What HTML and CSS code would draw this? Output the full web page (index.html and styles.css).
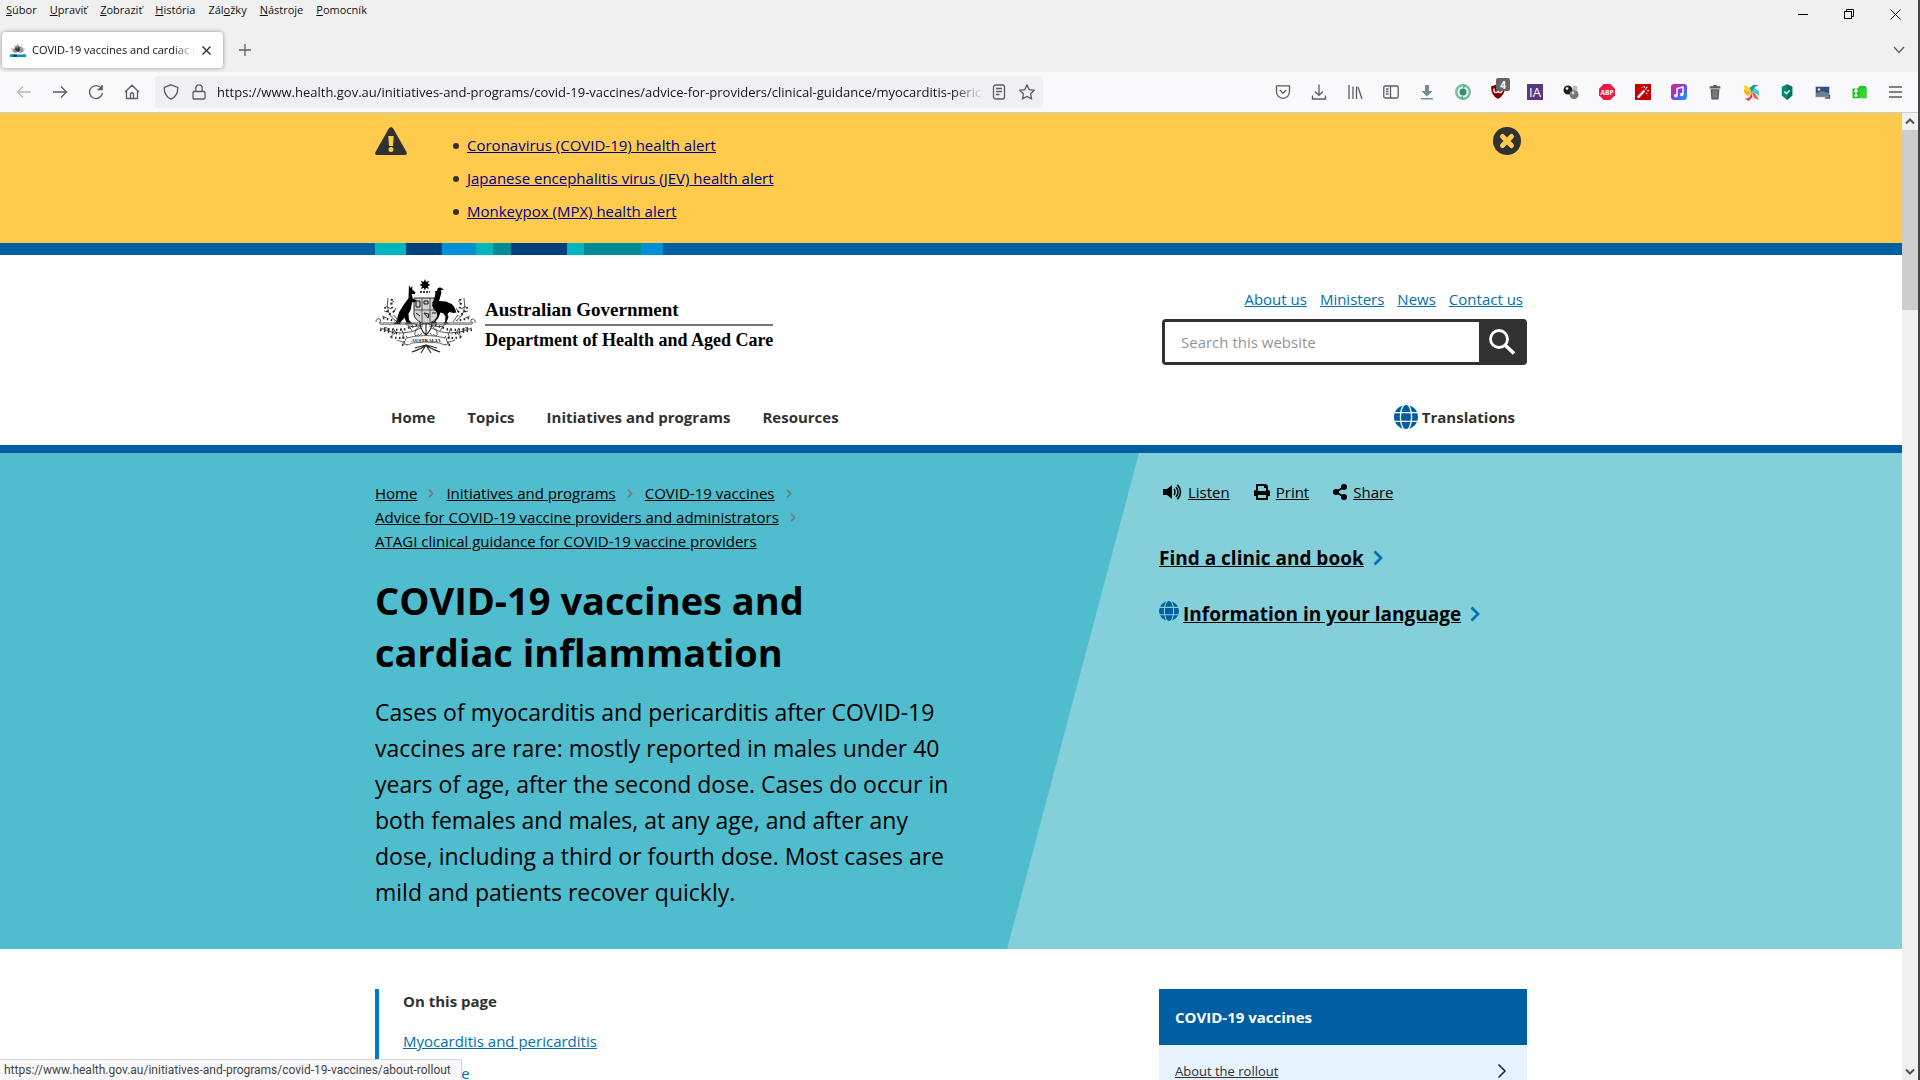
FILE: index.html
```html
<!DOCTYPE html>
<html lang="en">
<head>
<meta charset="utf-8">
<title>COVID-19 vaccines and cardiac inflammation</title>
<link rel="stylesheet" href="styles.css">
</head>
<body>
<svg class="defs" aria-hidden="true">
  <symbol id="globe" viewBox="0 0 24 24">
    <circle cx="12" cy="12" r="12" fill="#005ea2"/>
    <g fill="none" stroke="var(--gap, #fff)" stroke-width="1.3"><path d="M0 7.6H24M0 16.4H24"/><ellipse cx="12" cy="12" rx="5.6" ry="13"/></g>
  </symbol>
  <symbol id="chev" viewBox="0 0 10 16"><path d="M1.500 1.500 8 8l-6.500 6.500" fill="none" stroke="currentColor" stroke-width="var(--w, 2.800)"/></symbol>
</svg>

<div class="chrome">
  <div class="titlebar">
    <nav class="menu" lang="sk">
      <button><u>S</u>úbor</button><button><u>U</u>praviť</button><button><u>Z</u>obraziť</button><button><u>H</u>istória</button><button>Zál<u>o</u>žky</button><button><u>N</u>ástroje</button><button><u>P</u>omocník</button>
    </nav>
    <div class="controls">
      <button aria-label="Minimize"><svg width="10" height="10"><path d="M0 5.500H10" stroke="#000"/></svg></button>
      <button aria-label="Restore"><svg width="10" height="10" fill="none" stroke="#000"><path d="M.5 2.500h7v7h-7zM2.500 2.500v-2h7v7h-2"/></svg></button>
      <button aria-label="Close window"><svg width="11" height="11" stroke="#000"><path d="M.5.5l10 10M10.500.5l-10 10"/></svg></button>
    </div>
  </div>

  <div class="tabs">
    <div class="tab">
      <svg width="16" height="16" viewBox="0 0 16 16"><path d="M2 9 5 5l2-2 1-1 1 2 3 1 2 4-3 2-3-1-3 1z" fill="#999"/><path d="M5 8l1-4 1 3 2-3 1 4-2 2z" fill="#333"/><path d="M1 7h2M13 7h2M4 3l1 1M11 3l1-1" stroke="#aaa"/><path d="M0 12.500h16v2.500H0z" fill="#008fd5"/><path d="M0 12.500h3v2.500H0zM13 12.500h3v2.500h-3z" fill="#00a0a8"/><path d="M3 12.500h4v2.500H3z" fill="#003f80"/></svg>
      <span class="tab-title">COVID-19 vaccines and cardiac inflammation</span>
      <button aria-label="Close tab"><svg width="9" height="9" stroke="#222" stroke-width="1.200"><path d="M.5.5l8 8M8.500.5l-8 8"/></svg></button>
    </div>
    <button class="new-tab" aria-label="New tab"><svg width="12" height="12" stroke="#5b5b66" stroke-width="1.300"><path d="M6 0v12M0 6h12"/></svg></button>
    <button class="list-tabs" aria-label="List all tabs"><svg width="12" height="8" fill="none" stroke="#5b5b66" stroke-width="1.300"><path d="M1 1l5 5.500L11 1"/></svg></button>
  </div>

  <div class="toolbar">
    <button aria-label="Back"><svg width="16" height="16" class="ln dim"><path d="M15 8H1.500M7 2.500 1.500 8 7 13.500"/></svg></button>
    <button aria-label="Forward"><svg width="16" height="16" class="ln"><path d="M1 8h13.500M9 2.500 14.500 8 9 13.500"/></svg></button>
    <button aria-label="Reload"><svg width="16" height="16" class="ln"><path d="M13.500 4.500A6.500 6.500 0 1 0 14.500 8.800M14 1v4.500H9.500"/><path d="M14.500 1v5h-5z" fill="#5b5b66" stroke="none"/></svg></button>
    <button aria-label="Home"><svg width="16" height="16" class="ln"><path d="M1 8 8 1.200 15 8M2.500 7v7.500h11V7M6.500 14v-4.500q1.500-1.500 3 0V14"/></svg></button>
    <div class="urlbar">
      <svg width="16" height="16" class="ln"><path d="M8 .8 14.800 3.500Q15 12 8 15.200 1 12 1.200 3.500z"/></svg>
      <svg width="16" height="16" class="ln lock"><path d="M3 7.500h10q1 0 1 1v5.500q0 1-1 1H3q-1 0-1-1V8.500q0-1 1-1zM4.800 7V4a3.200 3.200 0 0 1 6.400 0v3"/></svg>
      <input type="text" aria-label="Address" value="https://www.health.gov.au/initiatives-and-programs/covid-19-vaccines/advice-for-providers/clinical-guidance/myocarditis-pericarditis">
      <button aria-label="Reader view"><svg width="16" height="16" class="ln"><rect x="2.500" y="1" width="11" height="14" rx="2"/><path d="M5 4.500h6M5 7.500h6M5 10.500h3.500"/></svg></button>
      <button aria-label="Bookmark"><svg width="16" height="16" class="ln"><path d="M8 1l2.200 4.600 5 .7-3.600 3.500.9 5L8 12.400l-4.500 2.400.9-5L.8 6.300l5-.7z"/></svg></button>
    </div>
    <div class="extensions">
      <button aria-label="Pocket"><svg width="16" height="16" class="ln"><path d="M1.500 1.800h13v6a6.500 6.500 0 0 1-13 0zM4.800 6 8 9.200 11.200 6"/></svg></button>
      <button aria-label="Downloads"><svg width="16" height="16" class="ln"><path d="M8 .5v10.500M4 7.500 8 11.300l4-3.800M1.500 11.500V15h13v-3.500"/></svg></button>
      <button aria-label="Library"><svg width="16" height="16" class="ln"><path d="M2 1v14M6 2.500V15M9.500 2.500V15M11 3l4 12"/></svg></button>
      <button aria-label="Sidebar"><svg width="16" height="16" class="ln"><rect x=".8" y="2" width="14.400" height="12" rx="1.500"/><path d="M7.500 2v12M3 5h2.500M3 7.500h2.500M3 10h2.500"/></svg></button>
      <button aria-label="Downloader"><svg width="16" height="16"><path d="M6 1h4v6h3.500L8 12.500 2.500 7H6zM2 14h12v1.500H2z" fill="#739090"/></svg></button>
      <button aria-label="Blocker"><svg width="16" height="16"><circle cx="8" cy="8" r="6.800" fill="#e8f5ef" stroke="#78bda2" stroke-width="2.400"/><circle cx="8" cy="8" r="3.500" fill="#3c8c78"/><path d="M8 0l3 2-3 3zM8 16l-3-2 3-3z" fill="#5eae90"/></svg></button>
      <button aria-label="uBlock"><svg width="20" height="22" viewBox="0 0 20 22" class="badge-icon"><path d="M8 6l7 2.500q0 9-7 12.500Q1 17.500 1 8.500z" fill="#800000"/><path d="M4 10.500v2q0 2 2 2t2-2v-2M8 12.500q0 2 2 2t2-2-2-2" fill="none" stroke="#fff" stroke-width="1.300"/><rect x="6" width="14" height="13" rx="2" fill="#666"/><text x="13" y="10.500" text-anchor="middle" class="badge">4</text></svg></button>
      <button aria-label="Internet Archive"><svg width="16" height="16"><rect width="16" height="16" fill="#57397f"/><text x="8" y="13" text-anchor="middle" class="ia">IA</text></svg></button>
      <button aria-label="Spheres"><svg width="16" height="16"><circle cx="5" cy="6" r="4.500" fill="#222"/><circle cx="11" cy="10.500" r="4.500" fill="#777"/><circle cx="12" cy="4" r="2.500" fill="#bbb"/><circle cx="4" cy="4.500" r="1.300" fill="#fff"/><circle cx="10" cy="9" r="1.400" fill="#ddd"/></svg></button>
      <button aria-label="Adblock Plus"><svg width="16" height="16" viewBox="0 0 17 17"><path d="M5 0h7l5 5v7l-5 5H5l-5-5V5z" fill="#ee1944"/><text x="8.500" y="11.500" text-anchor="middle" class="abp">ABP</text></svg></button>
      <button aria-label="Wand"><svg width="16" height="16" viewBox="0 0 17 17"><rect width="17" height="17" fill="#c80000"/><path d="M3 14.500 10 7" stroke="#fff" stroke-width="2.500"/><path d="M7 3.500h1M10 2v2M13 3l-1 1.500M13 7h2M12 9.500l1 1M11 6l1-1" stroke="#fff" stroke-width="1.200"/></svg></button>
      <button aria-label="Music"><svg width="16" height="16"><defs><linearGradient id="mg" x2="1" y2="1"><stop stop-color="#e6286e"/><stop offset=".5" stop-color="#7d3cf0"/><stop offset="1" stop-color="#00b0f0"/></linearGradient></defs><rect width="16" height="16" rx="3" fill="url(#mg)"/><path d="M6 11.500V4.500l6-1.500v7" fill="none" stroke="#fff" stroke-width="1.500"/><circle cx="4.800" cy="11.800" r="1.800" fill="#fff"/><circle cx="10.800" cy="10.500" r="1.800" fill="#fff"/></svg></button>
      <button aria-label="Trash"><svg width="16" height="16" viewBox="0 0 16 18"><path d="M2 2.500h4V1h4v1.500h4V5H2zM3 6h10l-1 11.500H4z" fill="#5a5a5a"/><path d="M6 7.500v8M8 7.500v8M10 7.500v8" stroke="#999"/></svg></button>
      <button aria-label="Pinwheel"><svg width="17" height="17" viewBox="0 0 18 18"><path d="M9 9 1 4l1-3 5 3z" fill="#ffd400"/><path d="M9 9 7 4l4-3 6 0-4 2z" fill="#1f95a3"/><path d="M9 9l3-5 5 4v5l-3-3z" fill="#4cc3d9"/><path d="M9 9l4 1 4 7-5-2z" fill="#f4623a"/><path d="M9 9l1 5-4 4-4-2 5-2z" fill="#f03e3e"/><path d="M9 9 5 13 1 9l0-4z" fill="#ffb01f"/></svg></button>
      <button aria-label="Shield"><svg width="14" height="16" viewBox="0 0 16 18"><path d="M8 0l6 3v10l-6 5-6-5V3z" fill="#008a68"/><path d="M8 0l6 3v10l-6 5z" fill="#00745c"/><path d="M5 8.500l2.500 2.500L11 7" fill="none" stroke="#fff" stroke-width="1.500"/></svg></button>
      <button aria-label="Screenshot"><svg width="16" height="13"><rect x=".5" y=".5" width="14" height="10.500" fill="#2d4f86" stroke="#c5ccd6"/><path d="M1 7l6-2 7 2v3H1z" fill="#6b7f90"/><circle cx="4" cy="3.500" r="1.300" fill="#ffe27a"/><path d="M10 12h4.500v-3" stroke="#555" fill="none" stroke-width="1.300"/></svg></button>
      <button aria-label="Folder"><svg width="17" height="14" viewBox="0 0 18 16"><path d="M1 4h6l2-3h6l2 1v13H1z" fill="#1fc21f"/><path d="M9 4h8v11H9z" fill="#35d435"/><path d="M5 5v8M3 7.500 5 5l2 2.500M3 12.500h4" stroke="#fff" stroke-width="1.400" fill="none"/></svg></button>
      <button aria-label="Menu"><svg width="16" height="16" class="ln"><path d="M2 3h13M2 8h13M2 13h13"/></svg></button>
    </div>
  </div>
</div>

<div class="view">
  <div class="page">
    <section class="alerts">
      <div class="wrap alerts-row">
        <svg width="32" height="28" viewBox="0 0 32 28"><path d="M13.800 1.500q2.200-3 4.400 0L31.500 25q1 3-1.500 3H2q-2.500 0-1.500-3z" fill="#313131"/><path d="M13.300 9h5.400l-.7 10h-4z" fill="#fecb4d"/><circle cx="16" cy="22.500" r="2.500" fill="#fecb4d"/></svg>
        <ul>
          <li><a href="#">Coronavirus (COVID-19) health alert</a></li>
          <li><a href="#">Japanese encephalitis virus (JEV) health alert</a></li>
          <li><a href="#">Monkeypox (MPX) health alert</a></li>
        </ul>
        <button aria-label="Close alerts"><svg width="28" height="28"><circle cx="14" cy="14" r="14" fill="#313131"/><path d="M9.500 9.500l9 9M18.500 9.500l-9 9" stroke="#fecb4d" stroke-width="5" stroke-linecap="round"/></svg></button>
      </div>
    </section>

    <div class="band"><div class="wrap stripes"><i class="teal w31"></i><i class="navy w36"></i><i class="sky w34"></i><i class="teal w17"></i><i class="sea w18"></i><i class="navy w56"></i><i class="teal w17"></i><i class="sea w57"></i><i class="sky w22"></i></div></div>

    <header class="site-head">
      <div class="wrap head-row">
        <a class="brand" href="#">
          <svg width="102" height="76" viewBox="0 0 102 76" aria-hidden="true">
            <path d="M50 1l1.200 2.900 2.900-1.200-1.200 2.900L55.500 7l-2.700 1.100 1 2.900-2.800-1.300L50 12.500l-1.200-2.800L46 11l1-2.900L44.500 7l2.600-1.400-1.200-2.900 2.900 1.200z"/>
            <path d="M45 14h10" stroke="#000" stroke-width="1.400" stroke-dasharray="2 1"/>
            <path d="M39 20h24v17q-1 6-12 9.500Q40 43 39 37z" fill="#d2d2d2" stroke="#222"/>
            <path d="M47 20v24M55 20v24M39 32h24" stroke="#555" fill="none"/>
            <path d="M41 23h4v6h-4zM49 23h4v3h-4zM57 24l4 4M61 24l-4 4M41 35l4 3M49 35l4 5 1-4zM57 35h4" stroke="#111" fill="none"/>
            <path d="M34 7l1.500 3 2-2-.3 3.500 3.300 3-.5 1.500-3.500.2 1.500 4.800 3.500 1-1 2-3.500.2-1 6.800-2.500 5 .5 6 3 3 5 .8H32l-2.500-6-3.500 4-1 2.500-11 1q7-1 8-6l2-7 5-8 4.500-6z"/>
            <path d="M62 13q0-4 3.500-3.500l3.500 2-3 .5q1 3-.5 6l-1.500 5q4 0 7 .5 5 1.500 8 5l2.500 6-3 .5-4-1-2 2 1 3-2 5 2.500 1.500h-6l2-2 .5-5-2-3-3-1-2 5-3 4 2 2h-7l4-2.500 3-5-1-4q-5-4-4-9l2.500-7q1-3 0-5z"/>
            <path d="M1 44q0-4 4-3 2 2-1 4h94q-4-2-1-4 4 0 3 4" fill="none" stroke="#555"/>
            <path d="M5 46.500h92" stroke="#999"/>
            <g fill="none" stroke="#444" stroke-width=".9" id="foliage">
              <path d="M48 46Q36 52 30 45M21 43Q10 36 13 20M16 31l-5-3M15 26l4-3M14 34l-5-1M18 35l3-5M12 40l-5-2M24 44l-5-7M46 50Q28 60 5 50M14 53l-3-4M21 55l-3-5M28 55l-2-5M20 55l-5 4M29 55l-2 6M37 53l-3-5M44 56Q32 68 22 62M35 62l-4-4M30 63l-3 4M48 48q-6 0-8 6t8 5M47 55q-4 6-8 5"/>
              <path stroke="#222" stroke-dasharray="1.500 2.500" stroke-width="2.200" d="M17 21q-2 8 3 14M10 29q2 6 8 9M8 40l12 3M5 52l20 4M16 59q8 2 16 0M27 67q6 0 12-5M33 50l9-3M9 50q12 3 22 1"/>
            </g>
            <use href="#foliage" transform="matrix(-1 0 0 1 102 0)"/>
            <path d="M51 45v14M45 44q0 8 6 13 6-5 6-13M40 70l11-3 11 3M37 74q9-3 14-7 5 4 14 7M46 75l5-8 5 8" fill="none" stroke="#222" stroke-width="1.100"/>
            <path d="M31 60q20-5 40 0l2 6q-5 2-8-1-14-2-28 0-3 3-8 1z" fill="#fff" stroke="#444" stroke-width=".8"/>
            <text x="51" y="64" text-anchor="middle" class="crest-text">AUSTRALIA</text>
          </svg>
          <span class="brand-text"><span class="gov">Australian Government</span><span class="dept">Department of Health and Aged Care</span></span>
        </a>
        <div class="head-tools">
          <nav class="quick"><a href="#">About us</a><a href="#">Ministers</a><a href="#">News</a><a href="#">Contact us</a></nav>
          <form class="search">
            <input type="search" aria-label="Search this website" placeholder="Search this website">
            <button type="button" aria-label="Search"><svg width="26" height="26" fill="none" stroke="#fff"><circle cx="10" cy="10" r="8.500" stroke-width="2.800"/><path d="M16 16l9 8.500" stroke-width="3.600"/></svg></button>
          </form>
        </div>
      </div>
      <nav class="wrap main-nav">
        <a href="#">Home</a><a href="#">Topics</a><a href="#">Initiatives and programs</a><a href="#">Resources</a>
        <a href="#" class="translate"><svg width="24" height="24"><use href="#globe"/></svg>Translations</a>
      </nav>
    </header>

    <section class="hero">
      <div class="slant"></div>
      <div class="wrap cols">
        <div class="lead">
          <nav class="crumbs" aria-label="Breadcrumb">
            <span><a href="#">Home</a><svg width="6" height="9"><use href="#chev"/></svg></span>
            <span><a href="#">Initiatives and programs</a><svg width="6" height="9"><use href="#chev"/></svg></span>
            <span><a href="#">COVID-19 vaccines</a><svg width="6" height="9"><use href="#chev"/></svg></span>
            <span><a href="#">Advice for COVID-19 vaccine providers and administrators</a><svg width="6" height="9"><use href="#chev"/></svg></span>
            <span><a href="#">ATAGI clinical guidance for COVID-19 vaccine providers</a></span>
          </nav>
          <h1>COVID-19 vaccines and cardiac inflammation</h1>
          <p>Cases of myocarditis and pericarditis after COVID-19 vaccines are rare: mostly reported in males under 40 years of age, after the second dose. Cases do occur in both females and males, at any age, and after any dose, including a third or fourth dose. Most cases are mild and patients recover quickly.</p>
        </div>
        <aside>
          <div class="actions">
            <a href="#"><svg width="19" height="16" viewBox="0 0 19 16"><path d="M0 5h4l5-4v14l-5-4H0z"/><path d="M11 5q2 3 0 6M13 3q4 5 0 10M14.500.8q6 7.200 0 14.400" fill="none" stroke="#000" stroke-width="1.500"/></svg><span>Listen</span></a>
            <a href="#"><svg width="16" height="16"><path fill-rule="evenodd" d="M2 0h10l2 2v4h.5Q16 6 16 8v4h-2v4H2v-4H0V8q0-2 1.500-2H2zM4 2v5h8V4h-2V2zM4 11v3h8v-3z"/></svg><span>Print</span></a>
            <a href="#"><svg width="14" height="16"><circle cx="11" cy="3" r="3"/><circle cx="3" cy="8" r="3"/><circle cx="11" cy="13" r="3"/><path d="M11 3 3 8l8 5" fill="none" stroke="#000" stroke-width="2"/></svg><span>Share</span></a>
          </div>
          <p class="cta"><a href="#">Find a clinic and book</a><svg width="10" height="16"><use href="#chev"/></svg></p>
          <p class="cta"><svg class="cta-globe" width="20" height="20"><use href="#globe"/></svg><a href="#">Information in your language</a><svg width="10" height="16"><use href="#chev"/></svg></p>
        </aside>
      </div>
    </section>

    <div class="wrap cols below">
      <nav class="toc">
        <h2>On this page</h2>
        <ul><li><a href="#">Myocarditis and pericarditis</a></li><li><a href="#">Incidence</a></li></ul>
      </nav>
      <nav class="card">
        <h2>COVID-19 vaccines</h2>
        <a href="#"><span>About the rollout</span><svg width="10" height="16"><use href="#chev"/></svg></a>
      </nav>
    </div>
  </div>
  <div class="scrollbar">
    <svg width="16" height="17"><path d="M4 10.500l4-4 4 4" fill="none" stroke="#505050" stroke-width="2"/></svg>
    <div class="thumb"></div>
    <svg width="16" height="17"><path d="M4 6.500l4 4 4-4" fill="none" stroke="#505050" stroke-width="2"/></svg>
  </div>
  <div class="status">https://www.health.gov.au/initiatives-and-programs/covid-19-vaccines/about-rollout</div>
</div>
</body>
</html>
```
FILE: styles.css
```css
* { box-sizing: border-box; }
body {
  margin: 0;
  height: 100vh;
  display: flex;
  flex-direction: column;
  overflow: hidden;
  border-right: 2px solid #444;
  background: #fff;
  color: #313131;
  font: 15px/24px "Open Sans", "Noto Sans", sans-serif;
}
button { border: 0; padding: 0; background: none; color: inherit; font: inherit; }
h1, h2, p, ul { margin: 0; padding: 0; }
svg { display: block; flex: none; }
.defs { width: 0; height: 0; position: absolute; }

/* Browser window */
.chrome { background: #f0f0f0; color: #111; }
.titlebar { display: flex; justify-content: space-between; height: 28px; }
.menu { display: flex; gap: 13px; padding-left: 6px; font-size: 11px; line-height: 20px; }
.menu button { height: 20px; }
.controls { display: flex; }
.controls button { width: 46px; display: grid; place-items: center; }
.tabs { display: flex; align-items: center; height: 44px; padding: 0 7px 0 2px; }
.tab {
  display: flex;
  align-items: center;
  gap: 6px;
  width: 221px;
  height: 36px;
  padding: 0 12px 0 8px;
  border-radius: 4px;
  background: #fff;
  box-shadow: 0 0 4px #0006;
  font-size: 11px;
}
.tab-title {
  flex: 1;
  overflow: hidden;
  white-space: nowrap;
  mask-image: linear-gradient(to left, transparent, #000 24px);
}
.new-tab { margin-left: 16px; }
.list-tabs { margin-left: auto; width: 24px; display: grid; place-items: center; }
.toolbar {
  display: flex;
  align-items: center;
  padding: 0 5px 0 6px;
  height: 41px;
  background: #f9f9fb;
  border-bottom: 1px solid #ccc;
}
.toolbar button { width: 36px; height: 32px; display: grid; place-items: center; }
.ln { fill: none; stroke: #5b5b66; stroke-width: 1.3; }
.dim { stroke: #b9b9bf; }
.urlbar {
  display: flex;
  align-items: center;
  flex: 0 1 888px;
  min-width: 200px;
  height: 32px;
  margin-left: 5px;
  padding: 0 2px 0 8px;
  border-radius: 4px;
  background: #f0f0f4;
}
.lock { margin: 0 10px 0 12px; }
.urlbar input {
  flex: 1;
  min-width: 0;
  border: 0;
  padding: 0;
  background: none;
  color: #15141a;
  font: 13px/24px "Open Sans", sans-serif;
  mask-image: linear-gradient(to left, transparent, #000 30px);
}
.urlbar button { width: 28px; }
.urlbar button:first-of-type { margin-left: 2px; }
.extensions { display: flex; margin-left: auto; }
.badge-icon { margin: -6px 0 0 2px; }
.badge { fill: #fff; font: bold 10px "Open Sans", sans-serif; }
.ia { fill: #fff; font: 13px "Open Sans", sans-serif; }
.abp { fill: #fff; font: bold 7px "Open Sans", sans-serif; }

/* Viewport */
.view { position: relative; flex: 1; min-height: 0; display: flex; }
.page { flex: 1; min-width: 0; overflow: hidden; }
.scrollbar { width: 16px; background: #f0f0f0; display: flex; flex-direction: column; }
.thumb { height: 180px; background: #cdcdcd; margin-bottom: auto; }
.status {
  position: absolute;
  left: 0;
  bottom: 0;
  padding: 0 10px 0 4px;
  border: solid #d5d5d5;
  border-width: 1px 1px 0 0;
  background: #f9f9fb;
  color: #444;
  font: 12px/20px Roboto, "Open Sans", sans-serif;
}
.wrap { max-width: 1152px; margin: 0 auto; }

/* Alerts */
.alerts { background: #fecb4d; }
.alerts-row { display: flex; align-items: flex-start; padding: 14px 6px 11px 0; }
.alerts ul { flex: 1; padding: 6px 0 0 46px; list-style: none; }
.alerts li { padding-left: 14px; line-height: 25px; margin-bottom: 8px; }
.alerts li::before {
  content: "";
  display: inline-block;
  width: 6px;
  height: 6px;
  margin: 0 8px 2px -14px;
  border-radius: 50%;
  background: #313131;
}
.alerts a { color: #00008b; }

.band { background: #005ea2; }
.stripes { display: flex; height: 12px; }
.teal { background: #00b5bd; }
.navy { background: #003f80; }
.sky { background: #0090d8; }
.sea { background: #008b94; }
.w17 { width: 17px; } .w18 { width: 18px; } .w22 { width: 22px; } .w31 { width: 31px; }
.w34 { width: 34px; } .w36 { width: 36px; } .w56 { width: 56px; } .w57 { width: 57px; }

/* Site header */
.site-head { border-bottom: 8px solid #005ea2; }
.head-row { display: flex; justify-content: space-between; align-items: flex-start; padding: 22px 0 24px; }
.brand { display: flex; padding-top: 1px; color: #000; text-decoration: none; font: bold 18px/28px "Liberation Serif", serif; }
.brand-text { display: flex; flex-direction: column; padding: 18px 0 0 8px; }
.gov { border-bottom: 2px solid #777; font-size: 19px; }
.crest-text { font: bold 5px "Liberation Serif", serif; }
.head-tools { width: 365px; padding-top: 10px; }
.quick { display: flex; justify-content: flex-end; gap: 13px; padding-right: 4px; }
.quick a, .toc a { color: #006fb0; }
.search {
  display: flex;
  height: 46px;
  margin-top: 8px;
  border: 3px solid #313131;
  border-radius: 4px;
  background: #313131;
}
.search input { flex: 1; min-width: 0; border: 0; border-radius: 0; padding: 0 16px; background: #fff; font: inherit; }
.search input::placeholder { color: #949494; }
.search button { width: 45px; display: grid; place-items: center; }
.main-nav { display: flex; gap: 32px; padding: 16px; font-weight: bold; }
.main-nav a { color: #313131; text-decoration: none; }
.main-nav .translate { display: flex; gap: 4px; margin-left: auto; margin-right: -4px; }

/* Hero */
.hero { position: relative; background: #4fbdcd; color: #000; }
.hero a { color: #000; }
.slant {
  position: absolute;
  inset: 0 0 0 calc(50% + 56px);
  background: #84d0da;
  clip-path: polygon(132px 0, 100% 0, 100% 100%, 0 100%);
}
.cols { position: relative; display: grid; grid-template-columns: minmax(0, 1fr) 368px; gap: 32px; }
.hero .cols { padding: 28px 0 39px; }
.lead { max-width: 580px; }
.crumbs { display: flex; flex-wrap: wrap; column-gap: 12px; }
.crumbs span { display: flex; align-items: center; gap: 11px; }
.crumbs svg { color: #777; }
h1 { max-width: 560px; margin-top: 21px; font-size: 38px; line-height: 52px; }
.lead p { margin-top: 16px; font-size: 23px; line-height: 36px; }
.actions { display: flex; gap: 24px; padding-left: 4px; margin-bottom: 39px; line-height: 22px; }
.actions a { display: flex; align-items: center; gap: 6px; text-decoration: none; }
.actions span { text-decoration: underline; }
.cta { display: flex; align-items: center; margin-bottom: 24px; font-size: 19px; line-height: 32px; font-weight: bold; }
.cta a + svg { margin-left: 9px; color: #0072b8; }
.cta-globe { --gap: #84d0da; margin: 0 4px 6px 0; }

/* Below the hero */
.below { padding-top: 40px; align-items: start; }
.below h2 { font-size: 15px; line-height: 24px; }
.toc { border-left: 4px solid #0076cc; padding: 0 24px 32px; }
.toc ul { list-style: none; padding-top: 12px; }
.toc li { padding: 4px 0; }
.card { background: #e6f2fe; }
.card h2 { padding: 16px; background: #005ea2; color: #fff; }
.card a { display: flex; justify-content: space-between; align-items: center; padding: 14px 20px 14px 16px; color: #313131; font-size: 13px; text-decoration: none; }
.card span { text-decoration: underline; }
.card svg { --w: 1.600; color: #00296b; }
```
